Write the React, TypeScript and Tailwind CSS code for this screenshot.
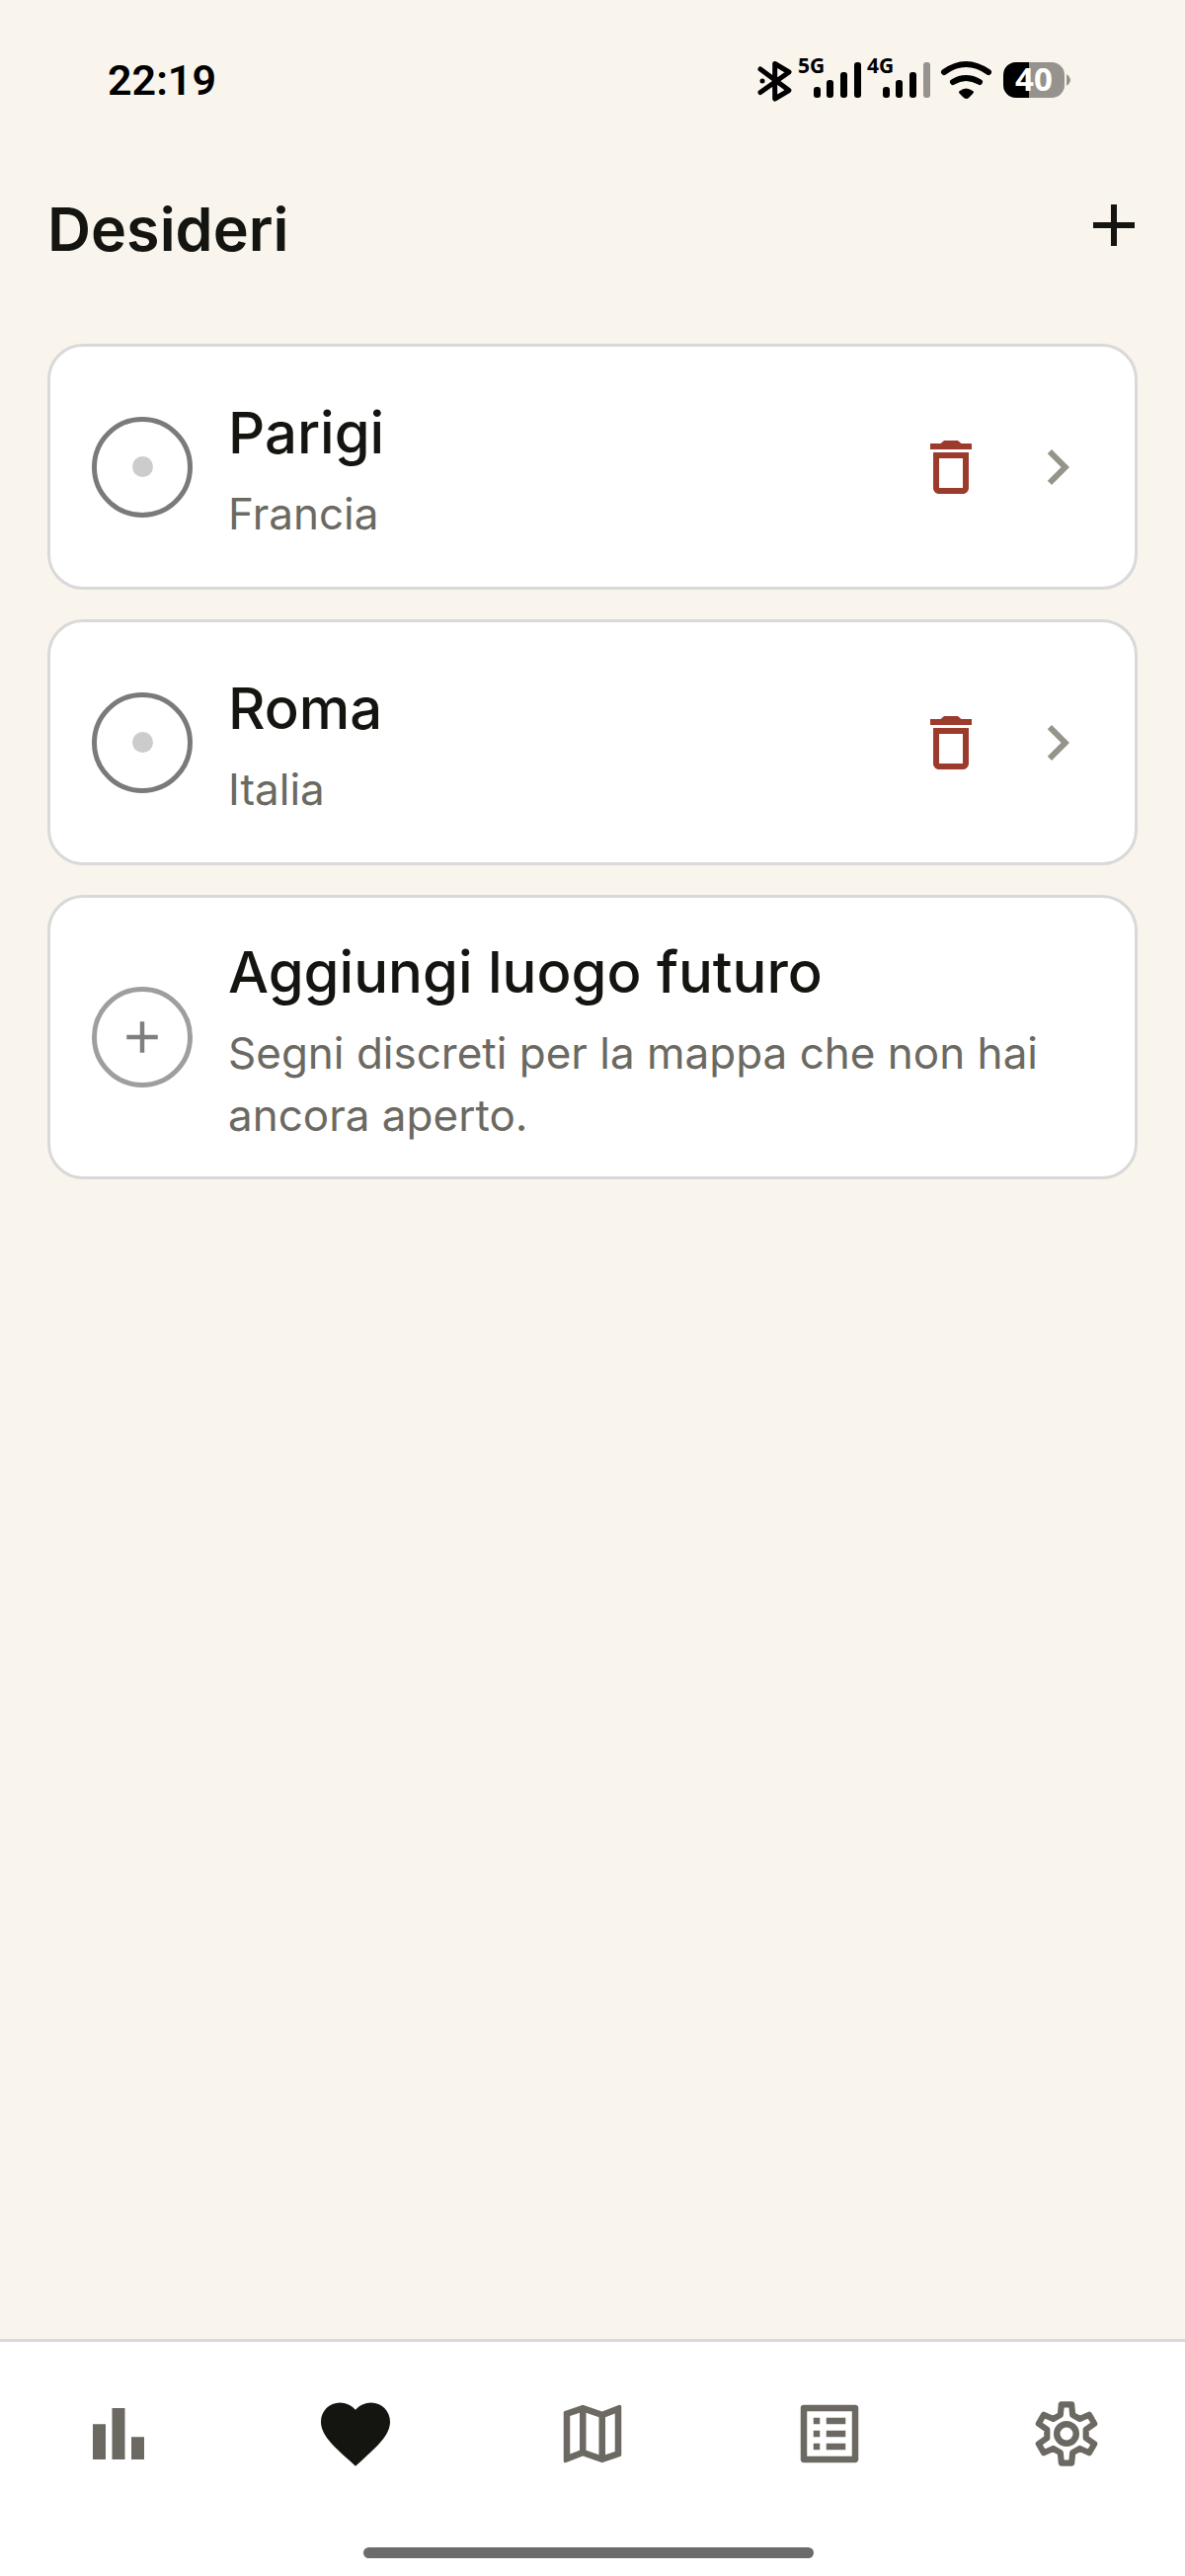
import type { ReactNode } from 'react';

type IconProps = { path: string; className: string };

const ICONS = {
  add: 'M19 13h-6v6h-2v-6H5v-2h6V5h2v6h6v2z',
  trash:
    'M16 9v10H8V9h8m-2-6h-4c-.4 0-.7.2-.9.5L8.5 4H5v2h14V4h-3.500l-.6-.5c-.2-.3-.5-.5-.9-.5zM18 7H6v12c0 1.100.9 2 2 2h8c1.100 0 2-.9 2-2V7z',
  chevron: 'M10 6L8.590 7.410 13.170 12l-4.580 4.590L10 18l6-6z',
  chart: 'M4 9h4v11H4zM16 13h4v7h-4zM10 4h4v16h-4z',
  heart:
    'M12 21.350l-1.450-1.320C5.400 15.360 2 12.280 2 8.500 2 5.420 4.420 3 7.500 3c1.740 0 3.410.810 4.500 2.090C13.090 3.810 14.760 3 16.500 3 19.580 3 22 5.420 22 8.500c0 3.780-3.400 6.860-8.550 11.540L12 21.350z',
  map: 'M20.500 3l-.16.03L15 5.100 9 3 3.360 4.900c-.21.07-.36.25-.36.48V20.500c0 .28.22.5.5.5l.16-.03L9 18.900l6 2.100 5.640-1.900c.21-.07.36-.25.36-.48V3.500c0-.28-.22-.5-.5-.5zM10 5.470l4 1.400v11.660l-4-1.400V5.470zm-5 .99l3-1.010v11.700l-3 1.160V6.460zm14 11.080l-3 1.010V6.860l3-1.160v11.840z',
  list: 'M19 5v14H5V5h14m1.100-2H3.900c-.5 0-.9.4-.9.9v16.200c0 .4.4.9.9.9h16.200c.4 0 .9-.5.9-.9V3.900c0-.5-.5-.9-.9-.9zM11 7h6v2h-6V7zm0 4h6v2h-6v-2zm0 4h6v2h-6zM7 7h2v2H7zm0 4h2v2H7zm0 4h2v2H7z',
};

const Icon = ({ path, className }: IconProps) => (
  <svg viewBox="0 0 24 24" fill="currentColor" aria-hidden="true" className={className}>
    <path d={path} fillRule="evenodd" />
  </svg>
);

const GearIcon = ({ className }: { className: string }) => (
  <svg viewBox="-12 -12 24 24" fill="none" stroke="currentColor" aria-hidden="true" className={className}>
    <path
      d="M-1.600-9.100L1.600-9.100 1.900-5.900 4.160-4.600 7.080-5.940 8.680-3.160 6.060-1.300 6.060 1.300 8.680 3.160 7.080 5.940 4.160 4.600 1.900 5.900 1.600 9.100-1.600 9.100-1.900 5.900-4.160 4.600-7.080 5.940-8.680 3.160-6.060 1.300-6.060-1.300-8.680-3.160-7.080-5.940-4.160-4.600-1.900-5.900z"
      strokeWidth="1.9"
      strokeLinejoin="round"
    />
    <circle r="3" strokeWidth="2" />
  </svg>
);

const SignalBars = ({ x, last }: { x: number; last: string }) => (
  <g transform={`translate(${x} 0)`}>
    <rect x="0" y="29" width="7" height="11" rx="3" />
    <rect x="13" y="22" width="7" height="18" rx="3" />
    <rect x="27" y="14" width="7" height="26" rx="3" />
    <rect x="41" y="4" width="7" height="36" rx="3" fill={last} />
  </g>
);

const StatusBar = () => {
  return (
    <div className="flex h-[162px] items-center justify-between pl-[109px] pr-[116px]">
      <time className="font-['Roboto',sans-serif] text-[43px] font-semibold text-black">22:19</time>
      <svg
        viewBox="0 -12 318 68"
        role="img"
        aria-label="Bluetooth, 5G, 4G, Wi-Fi, batteria 40%"
        className="h-[68px] w-[318px] font-['Noto_Sans',sans-serif] font-bold"
      >
        <path d="M4 11 33 32.500 18.700 41V5.500L33 14 4 34.500" fill="none" stroke="#000" strokeWidth="5" strokeLinecap="round" strokeLinejoin="round" />
        <circle cx="6" cy="23" r="2.500" />
        <text x="42" y="15" fontSize="21">5G</text>
        <SignalBars x={58} last="#000" />
        <text x="112" y="15" fontSize="21">4G</text>
        <SignalBars x={128} last="#96938e" />
        <path d="M190 14Q212 -2 235 14M199 24Q212 16 226 24" fill="none" stroke="#000" strokeWidth="6" strokeLinecap="round" />
        <path d="M206 33q6-5 13 0q2 1 0 3l-4 4q-2 2-5 0l-4-4q-2-2 0-3z" />
        <rect x="250" y="4" width="62" height="36" rx="13" fill="#96938e" />
        <path d="M276 4v36h-13a13 13 0 0 1-13-13V17a13 13 0 0 1 13-13z" />
        <path d="M314 16q4 3 4 6t-4 6z" fill="#96938e" />
        <text x="281" y="33" fontSize="33" textAnchor="middle" fill="#fff">40</text>
      </svg>
    </div>
  );
};

const PageHeader = () => {
  return (
    <header className="flex h-[132px] items-center justify-between pl-12 pr-9">
      <h1 className="pt-2 text-[61px] leading-[78px] font-semibold">Desideri</h1>
      <button type="button" aria-label="Aggiungi">
        <Icon path={ICONS.add} className="size-[72px]" />
      </button>
    </header>
  );
};

const Card = ({ title, subtitle, marker, children }: { title: string; subtitle: string; marker: ReactNode; children?: ReactNode }) => {
  return (
    <li className="flex min-h-[249px] items-center gap-9 rounded-[36px] border-3 border-[#d9d9d9] bg-white px-[42px] py-[30px]">
      {marker}
      <div className="min-w-0 flex-1">
        <h2 className="text-[58px] leading-[90px] font-medium">{title}</h2>
        <p className="mt-[6px] text-[44px] leading-[63px] text-[#6b6961]">{subtitle}</p>
      </div>
      {children}
    </li>
  );
};

const WishCard = ({ city, country }: { city: string; country: string }) => {
  return (
    <Card
      title={city}
      subtitle={country}
      marker={
        <span className="flex size-[102px] shrink-0 items-center justify-center rounded-full border-5 border-[#7a7a7a]">
          <span className="size-[21px] rounded-full bg-[#cccccc]" />
        </span>
      }
    >
      <button type="button" aria-label={`Elimina ${city}`} className="text-[#9c3a2c]">
        <Icon path={ICONS.trash} className="size-[72px]" />
      </button>
      <button type="button" aria-label={`Apri ${city}`} className="text-[#96938a]">
        <Icon path={ICONS.chevron} className="size-[72px]" />
      </button>
    </Card>
  );
};

const AddCard = () => {
  return (
    <Card
      title="Aggiungi luogo futuro"
      subtitle="Segni discreti per la mappa che non hai ancora aperto."
      marker={
        <button
          type="button"
          aria-label="Aggiungi luogo futuro"
          className="flex size-[102px] shrink-0 items-center justify-center rounded-full border-5 border-[#9e9e9e] text-[#7f7f7f]"
        >
          <Icon path={ICONS.add} className="size-[54px]" />
        </button>
      }
    />
  );
};

const TABS = [
  { label: 'Statistiche', icon: <Icon path={ICONS.chart} className="size-[78px]" /> },
  { label: 'Desideri', icon: <Icon path={ICONS.heart} className="size-[84px]" />, active: true },
  { label: 'Mappa', icon: <Icon path={ICONS.map} className="size-[78px]" /> },
  { label: 'Elenco', icon: <Icon path={ICONS.list} className="size-[78px]" /> },
  { label: 'Impostazioni', icon: <GearIcon className="size-[78px]" /> },
];

const TabBar = () => {
  return (
    <nav className="border-t-3 border-[#d9d9d6] bg-white pb-[18px]">
      <div className="grid h-[186px] grid-cols-5">
        {TABS.map((tab) => (
          <a
            key={tab.label}
            href="#"
            aria-label={tab.label}
            aria-current={tab.active ? 'page' : undefined}
            className={tab.active ? 'flex items-center justify-center' : 'flex items-center justify-center text-[#6b6961]'}
          >
            {tab.icon}
          </a>
        ))}
      </div>
      <div className="mt-[22px] flex justify-center pr-2">
        <div className="h-[11px] w-[456px] rounded-full bg-[#6b6b6b]" />
      </div>
    </nav>
  );
};

export default function App() {
  return (
    <div className="flex min-h-screen flex-col bg-[#f9f4ec] font-['Inter',sans-serif] text-[#141411]">
      <StatusBar />
      <PageHeader />
      <main className="flex-1 px-12 pt-[54px]">
        <ul className="flex flex-col gap-[30px]">
          <WishCard city="Parigi" country="Francia" />
          <WishCard city="Roma" country="Italia" />
          <AddCard />
        </ul>
      </main>
      <TabBar />
    </div>
  );
}
